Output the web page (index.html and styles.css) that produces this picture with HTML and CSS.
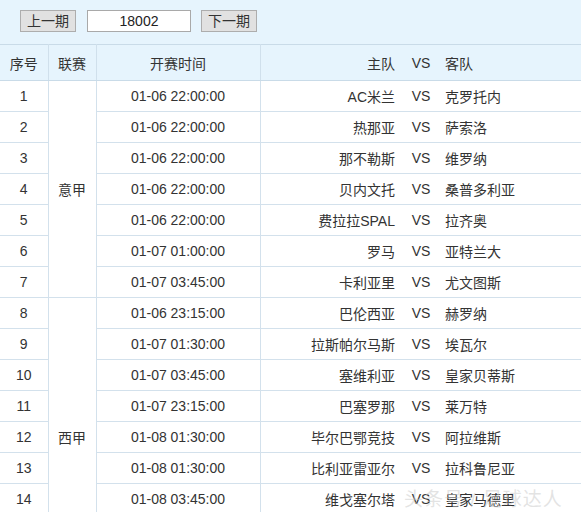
FILE: index.html
```html
<!DOCTYPE html>
<html lang="zh">
<head>
<meta charset="utf-8">
<link rel="stylesheet" href="styles.css">
</head>
<body>
<div class="toolbar">
  <button class="btn">上一期</button>
  <input class="issue" type="text" value="18002">
  <button class="btn">下一期</button>
</div>
<table class="matches">
  <colgroup>
    <col class="c-no"><col class="c-lg"><col class="c-time"><col class="c-home"><col class="c-vs"><col class="c-away">
  </colgroup>
  <thead>
    <tr><th>序号</th><th>联赛</th><th>开赛时间</th><th class="home">主队</th><th class="vs">VS</th><th class="away">客队</th></tr>
  </thead>
  <tbody>
    <tr><td>1</td><td class="league" rowspan="7">意甲</td><td>01-06 22:00:00</td><td class="home">AC米兰</td><td class="vs">VS</td><td class="away">克罗托内</td></tr>
    <tr><td>2</td><td>01-06 22:00:00</td><td class="home">热那亚</td><td class="vs">VS</td><td class="away">萨索洛</td></tr>
    <tr><td>3</td><td>01-06 22:00:00</td><td class="home">那不勒斯</td><td class="vs">VS</td><td class="away">维罗纳</td></tr>
    <tr><td>4</td><td>01-06 22:00:00</td><td class="home">贝内文托</td><td class="vs">VS</td><td class="away">桑普多利亚</td></tr>
    <tr><td>5</td><td>01-06 22:00:00</td><td class="home">费拉拉SPAL</td><td class="vs">VS</td><td class="away">拉齐奥</td></tr>
    <tr><td>6</td><td>01-07 01:00:00</td><td class="home">罗马</td><td class="vs">VS</td><td class="away">亚特兰大</td></tr>
    <tr><td>7</td><td>01-07 03:45:00</td><td class="home">卡利亚里</td><td class="vs">VS</td><td class="away">尤文图斯</td></tr>
    <tr><td>8</td><td class="league" rowspan="9">西甲</td><td>01-06 23:15:00</td><td class="home">巴伦西亚</td><td class="vs">VS</td><td class="away">赫罗纳</td></tr>
    <tr><td>9</td><td>01-07 01:30:00</td><td class="home">拉斯帕尔马斯</td><td class="vs">VS</td><td class="away">埃瓦尔</td></tr>
    <tr><td>10</td><td>01-07 03:45:00</td><td class="home">塞维利亚</td><td class="vs">VS</td><td class="away">皇家贝蒂斯</td></tr>
    <tr><td>11</td><td>01-07 23:15:00</td><td class="home">巴塞罗那</td><td class="vs">VS</td><td class="away">莱万特</td></tr>
    <tr><td>12</td><td>01-08 01:30:00</td><td class="home">毕尔巴鄂竞技</td><td class="vs">VS</td><td class="away">阿拉维斯</td></tr>
    <tr><td>13</td><td>01-08 01:30:00</td><td class="home">比利亚雷亚尔</td><td class="vs">VS</td><td class="away">拉科鲁尼亚</td></tr>
    <tr><td>14</td><td>01-08 03:45:00</td><td class="home">维戈塞尔塔</td><td class="vs">VS</td><td class="away">皇家马德里</td></tr>
    <tr><td>15</td><td>01-08 03:45:00</td><td class="home">马拉加</td><td class="vs">VS</td><td class="away">赫塔菲</td></tr>
    <tr><td>16</td><td>01-09 04:00:00</td><td class="home">皇家社会</td><td class="vs">VS</td><td class="away">马德里竞技</td></tr>
  </tbody>
</table>
<div class="watermark">头条号 / 足球达人</div>
</body>
</html>
```
FILE: styles.css
```css
html, body {
  margin: 0;
  padding: 0;
  background: #ffffff;
}
body {
  font-family: "Liberation Sans", "Noto Sans CJK SC", sans-serif;
  font-size: 14px;
  color: #333333;
  width: 581px;
  overflow: hidden;
}
.toolbar {
  height: 44px;
  box-sizing: border-box;
  background: #e6f4fd;
  display: flex;
  align-items: flex-start;
  padding: 10px 0 0 20px;
  gap: 11px;
}
.btn {
  width: 56px;
  height: 22px;
  box-sizing: border-box;
  background: #e1e1e1;
  border: 1px solid #adadad;
  font-family: inherit;
  font-size: 14px;
  color: #333;
  padding: 0;
  line-height: 20px;
}
.issue {
  width: 104px;
  height: 22px;
  box-sizing: border-box;
  border: 1px solid #a9a9a9;
  background: #fff;
  text-align: center;
  font-family: inherit;
  font-size: 14px;
  color: #222;
  padding: 0;
  margin-right: -1px;
}
.matches {
  border-collapse: collapse;
  width: 581px;
  table-layout: fixed;
}
.c-no { width: 48px; }
.c-lg { width: 48px; }
.c-time { width: 164px; }
.c-home { width: 145px; }
.c-vs { width: 32px; }
.c-away { width: auto; }
.matches th {
  height: 36px;
  box-sizing: border-box;
  background: #e6f4fd;
  font-weight: normal;
  border-top: 1px solid #c9dbe8;
  border-bottom: 1px solid #c9dbe8;
  padding: 0;
  text-align: center;
}
.matches td {
  height: 31px;
  box-sizing: border-box;
  border-bottom: 1px solid #d3e1ec;
  padding: 0;
  text-align: center;
  background: #fff;
}
.matches th:nth-child(-n+3),
.matches td:not(.home):not(.vs):not(.away) {
  border-right: 1px solid #d3e1ec;
}
.matches th:nth-child(-n+3) {
  border-right-color: #d0e0ec;
}
.matches .home {
  text-align: right;
  padding-right: 10px;
}
.matches .vs {
  text-align: center;
}
.matches .away {
  text-align: left;
  padding-left: 8px;
}
.matches td.league {
  vertical-align: middle;
}
.watermark {
  position: absolute;
  left: 404px;
  top: 484px;
  font-size: 19px;
  color: rgba(200, 200, 200, 0.5);
  letter-spacing: 1px;
  white-space: nowrap;
}
```
